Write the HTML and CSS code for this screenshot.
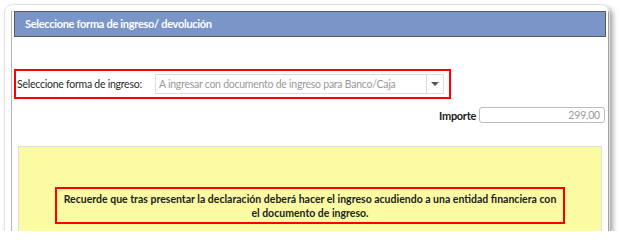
FILE: index.html
```html
<!DOCTYPE html>
<html lang="es">
<head>
    <meta charset="UTF-8">
    <title>Forma de ingreso</title>
    <link rel="stylesheet" href="styles.css">
</head>
<body>
    <div class="shot">
        <div class="page">
            <div class="panel-header">Seleccione forma de ingreso/ devolución</div>

            <div class="form-row highlight">
                <label class="form-label" for="forma">Seleccione forma de ingreso:</label>
                <div class="select-box" id="forma">
                    <span class="select-value">A ingresar con documento de ingreso para Banco/Caja</span>
                    <span class="select-arrow"></span>
                </div>
            </div>

            <div class="amount-row">
                <span class="amount-label">Importe</span>
                <div class="amount-input">299,00</div>
            </div>

            <div class="notice">
                <div class="notice-text highlight">
                    Recuerde que tras presentar la declaración deberá hacer el ingreso acudiendo a una entidad financiera con el documento de ingreso.
                </div>
            </div>
        </div>
    </div>
</body>
</html>
```

FILE: styles.css
```css
body {
    margin: 0;
    background: #fff;
    font-family: Lato, "Open Sans", sans-serif;
    color: #333;
}

.shot {
    margin: 4px 0 0 4px;
    width: 606px;
    height: 227px;
    box-sizing: border-box;
    padding: 6px 0 0 6px;
    border: 1px solid #e2e2e2;
    border-bottom: none;
    border-radius: 9px 9px 0 0;
    box-shadow: 3px 3px 5px rgba(0, 0, 0, 0.35);
    overflow: hidden;
    background: #fff;
}

.page {
    height: 100%;
    border-left: 1px solid #b4b4b4;
    border-right: 1px solid #a0a0a0;
    padding: 0 2px;
}

.panel-header {
    height: 24px;
    line-height: 24px;
    background: #7a96c8;
    border: 1px solid #5c5c5c;
    color: #fff;
    font-weight: bold;
    font-size: 11px;
    letter-spacing: -0.3px;
    padding-left: 10px;
}

.highlight {
    border: 2px solid #f00;
}

.form-row {
    margin-top: 32px;
    width: 432px;
    height: 26px;
    display: flex;
    align-items: center;
    padding-left: 1px;
    white-space: nowrap;
}

.form-label {
    flex-shrink: 0;
    font-size: 10.5px;
    letter-spacing: -0.25px;
    color: #2a2a2a;
    width: 138px;
}

.select-box {
    flex-shrink: 0;
    width: 287px;
    height: 18px;
    border: 1px solid #ddd;
    display: flex;
    align-items: center;
    justify-content: space-between;
}

.select-value {
    font-size: 10.5px;
    letter-spacing: -0.25px;
    color: #999;
    padding-left: 3px;
}

.select-arrow {
    width: 16px;
    height: 18px;
    border-left: 1px solid #ddd;
    position: relative;
}

.select-arrow::after {
    content: "";
    position: absolute;
    left: 4px;
    top: 7px;
    border-left: 4px solid transparent;
    border-right: 4px solid transparent;
    border-top: 4px solid #555;
}

.amount-row {
    margin-top: 8px;
    display: flex;
    justify-content: flex-end;
    align-items: center;
    gap: 3px;
    padding-right: 1px;
}

.amount-label {
    font-size: 11px;
    letter-spacing: -0.3px;
    font-weight: bold;
    color: #222;
}

.amount-input {
    width: 120px;
    height: 14px;
    line-height: 14px;
    border: 1px solid #bbb;
    border-radius: 3px;
    text-align: right;
    font-size: 10.5px;
    letter-spacing: -0.2px;
    color: #999;
    padding-right: 4px;
}

.notice {
    margin: 23px 4px 0;
    background: #fbfba4;
    border: 1px solid #dedede;
    padding: 40px 36px 20px;
}

.notice-text {
    text-align: center;
    font-size: 10.5px;
    font-weight: bold;
    color: #222;
    line-height: 14px;
    padding: 3px 2px 2px;
}
```
